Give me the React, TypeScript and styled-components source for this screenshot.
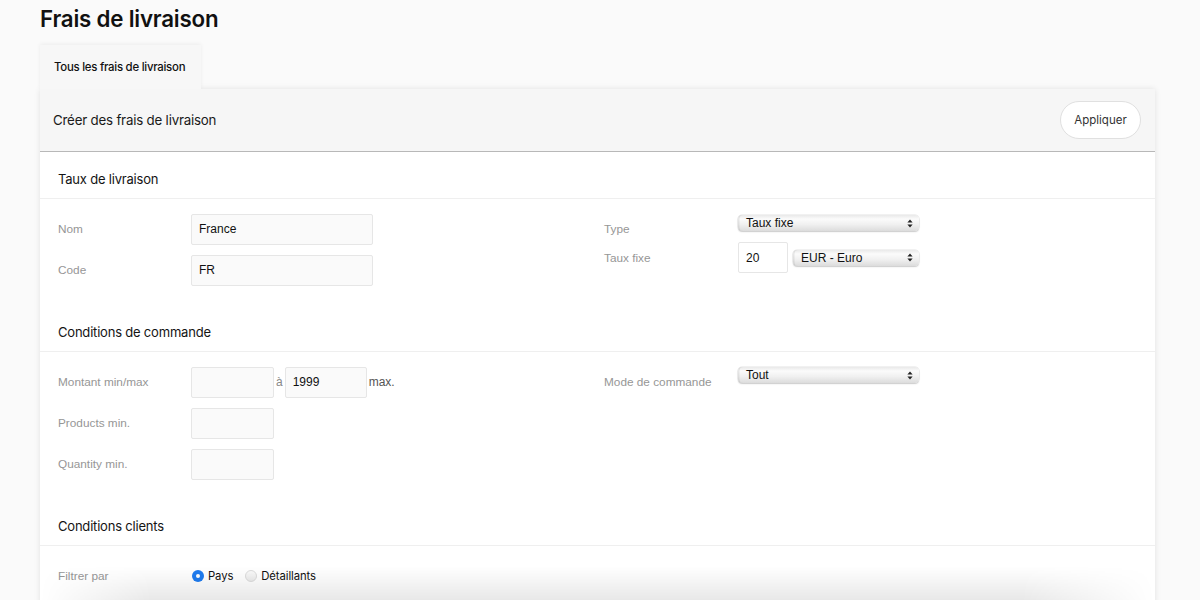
import React from "react";
import styled, { createGlobalStyle } from "styled-components";

const Global = createGlobalStyle`
  html, body { margin: 0; padding: 0; background: #fafafa; }
  body { font-family: "Inter", "Liberation Sans", sans-serif; color: #111; overflow: hidden; }
  * { box-sizing: border-box; }
`;

const Page = styled.div`
  padding: 0 45px 0 40px;
  height: 600px;
  overflow: hidden;
`;

const Title = styled.h1`
  margin: 0;
  padding-top: 5px;
  font-size: 22.3px;
  line-height: 28px;
  font-weight: 600;
  letter-spacing: -0.2px;
  color: #111;
`;

const TabBar = styled.div`
  display: flex;
  margin-top: 12px;
`;

const Tab = styled.div`
  width: 161px;
  height: 44px;
  display: flex;
  align-items: center;
  padding-left: 14px;
  font-size: 11.4px;
  font-weight: 500;
  letter-spacing: -0.25px;
  background: #f7f7f7;
  box-shadow: 0 -1px 4px rgba(0, 0, 0, 0.06);
  position: relative;
  z-index: 1;
`;

const Card = styled.div`
  background: #fff;
  box-shadow: 0 0 6px rgba(0, 0, 0, 0.1);
`;

const CardHeader = styled.div`
  height: 63px;
  display: flex;
  align-items: center;
  justify-content: space-between;
  padding: 0 14px 0 13px;
  background: #f6f6f6;
  border-bottom: 1px solid #b8b8b8;
  position: relative;
  z-index: 2;
`;

const HeaderTitle = styled.div`
  font-size: 13.3px;
  letter-spacing: -0.2px;
  color: #1a1a1a;
`;

const PillButton = styled.button`
  width: 81px;
  height: 38px;
  border-radius: 19px;
  border: 1px solid #e0e0e0;
  background: #fff;
  font-family: "Inter", "Liberation Sans", sans-serif;
  font-size: 11.5px;
  color: #333;
  cursor: pointer;
`;

const Section = styled.section`
  padding-bottom: 20px;
`;

const SectionHead = styled.div`
  height: 47px;
  padding: 19px 18px 0;
  font-size: 13px;
  line-height: 16px;
  letter-spacing: -0.2px;
  border-bottom: 1px solid #efefef;
  color: #141414;
`;

const Columns = styled.div`
  display: grid;
  grid-template-columns: 546px 1fr;
  padding: 15px 18px 0;
`;

const Column = styled.div<{ $gap?: number }>`
  display: flex;
  flex-direction: column;
  gap: ${(p) => (p.$gap === undefined ? 11 : p.$gap)}px;
`;

const Row = styled.div<{ $h?: number; $align?: string }>`
  display: flex;
  align-items: ${(p) => p.$align || "center"};
  height: ${(p) => (p.$h ? `${p.$h}px` : "30px")};
`;

const Label = styled.div<{ $w?: number; $lh?: number }>`
  width: ${(p) => p.$w || 133}px;
  flex: none;
  font-family: "Liberation Sans", "Helvetica", sans-serif;
  font-size: 11.8px;
  line-height: ${(p) => (p.$lh ? `${p.$lh}px` : "normal")};
  color: #969696;
`;

const Input = styled.div<{ $w: number; $h?: number }>`
  width: ${(p) => p.$w}px;
  height: ${(p) => p.$h || 31}px;
  flex: none;
  background: #fafafa;
  border: 1px solid #e6e6e6;
  border-radius: 2px;
  display: flex;
  align-items: center;
  padding-left: 7px;
  font-family: "Liberation Sans", "Helvetica", sans-serif;
  font-size: 12px;
  color: #111;
`;

const WhiteInput = styled(Input)`
  background: #fff;
`;

const Joiner = styled.span<{ $dark?: boolean }>`
  font-family: "Liberation Sans", "Helvetica", sans-serif;
  font-size: 12px;
  color: ${(p) => (p.$dark ? "#555" : "#888")};
  padding: 0 2px 0 2px;
`;

const FakeSelect = styled.div<{ $w: number; $mt?: number; $ml?: number }>`
  width: ${(p) => p.$w}px;
  height: 16px;
  margin-top: ${(p) => p.$mt || 0}px;
  margin-left: ${(p) => p.$ml || 0}px;
  flex: none;
  border-radius: 4px;
  background: linear-gradient(#e9e9e9 0%, #fbfbfb 25%, #f0f0f0 60%, #dcdcdc 100%);
  box-shadow: 0 0 0 0.5px rgba(0, 0, 0, 0.1), 0 1px 1.5px rgba(0, 0, 0, 0.16),
    inset 1.5px 0 0 rgba(0, 0, 0, 0.08);
  display: flex;
  align-items: center;
  justify-content: space-between;
  padding: 0 6px 0 8px;
  font-family: "Liberation Sans", "Helvetica", sans-serif;
  font-size: 12px;
  color: #111;
`;

const RadioGroup = styled.div`
  display: flex;
  align-items: center;
  padding-left: 1px;
  font-family: "Inter", "Liberation Sans", sans-serif;
  font-size: 11.3px;
  letter-spacing: -0.1px;
  color: #111;
`;

const RadioDot = styled.span<{ $on?: boolean }>`
  width: 12px;
  height: 12px;
  border-radius: 50%;
  flex: none;
  margin-right: 4px;
  background: ${(p) =>
    p.$on ? "#1f7cf0" : "linear-gradient(#fafafa, #ececec)"};
  border: ${(p) => (p.$on ? "none" : "1px solid #dcdcdc")};
  display: flex;
  align-items: center;
  justify-content: center;
  &::after {
    content: "";
    width: 4px;
    height: 4px;
    border-radius: 50%;
    background: #fff;
    display: ${(p) => (p.$on ? "block" : "none")};
  }
`;

const RadioText = styled.span`
  margin-right: 12px;
`;

const BottomFade = styled.div`
  position: fixed;
  left: 40px;
  width: 1115px;
  bottom: 0;
  height: 34px;
  pointer-events: none;
  background: linear-gradient(rgba(0, 0, 0, 0), rgba(0, 0, 0, 0.09));
  -webkit-mask-image: linear-gradient(90deg, transparent 0%, #000 10%, #000 88%, transparent 100%);
`;

const Arrows = () => (
  <svg width="6" height="9" viewBox="0 0 6 9">
    <path d="M3 0.5 L5.6 3.6 H0.4 Z" fill="#222" />
    <path d="M3 8.5 L5.6 5.4 H0.4 Z" fill="#222" />
  </svg>
);

export default function App() {
  return (
    <>
      <Global />
      <Page>
        <Title>Frais de livraison</Title>
        <TabBar>
          <Tab>Tous les frais de livraison</Tab>
        </TabBar>
        <Card>
          <CardHeader>
            <HeaderTitle>Créer des frais de livraison</HeaderTitle>
            <PillButton>Appliquer</PillButton>
          </CardHeader>

          <Section>
            <SectionHead>Taux de livraison</SectionHead>
            <Columns>
              <Column>
                <Row>
                  <Label>Nom</Label>
                  <Input $w={182}>France</Input>
                </Row>
                <Row>
                  <Label>Code</Label>
                  <Input $w={182}>FR</Input>
                </Row>
              </Column>
              <Column $gap={0}>
                <Row $h={28} $align="flex-start">
                  <Label $w={134} $lh={30}>Type</Label>
                  <FakeSelect $w={181} $mt={1}>
                    <span>Taux fixe</span>
                    <Arrows />
                  </FakeSelect>
                </Row>
                <Row $h={31}>
                  <Label $w={134}>Taux fixe</Label>
                  <WhiteInput $w={50}>20</WhiteInput>
                  <FakeSelect $w={126} $ml={5}>
                    <span>EUR - Euro</span>
                    <Arrows />
                  </FakeSelect>
                </Row>
              </Column>
            </Columns>
          </Section>

          <Section>
            <SectionHead>Conditions de commande</SectionHead>
            <Columns>
              <Column>
                <Row>
                  <Label>Montant min/max</Label>
                  <Input $w={83} />
                  <Joiner>à</Joiner>
                  <Input $w={82}>1999</Input>
                  <Joiner $dark>max.</Joiner>
                </Row>
                <Row>
                  <Label>Products min.</Label>
                  <Input $w={83} />
                </Row>
                <Row>
                  <Label>Quantity min.</Label>
                  <Input $w={83} />
                </Row>
              </Column>
              <Column>
                <Row $align="flex-start">
                  <Label $w={134} $lh={30}>Mode de commande</Label>
                  <FakeSelect $w={181}>
                    <span>Tout</span>
                    <Arrows />
                  </FakeSelect>
                </Row>
              </Column>
            </Columns>
          </Section>

          <Section>
            <SectionHead>Conditions clients</SectionHead>
            <Columns>
              <Column>
                <Row>
                  <Label>Filtrer par</Label>
                  <RadioGroup>
                    <RadioDot $on />
                    <RadioText>Pays</RadioText>
                    <RadioDot />
                    <RadioText>Détaillants</RadioText>
                  </RadioGroup>
                </Row>
                <Row />
                <Row />
              </Column>
            </Columns>
          </Section>
        </Card>
      </Page>
      <BottomFade />
    </>
  );
}
